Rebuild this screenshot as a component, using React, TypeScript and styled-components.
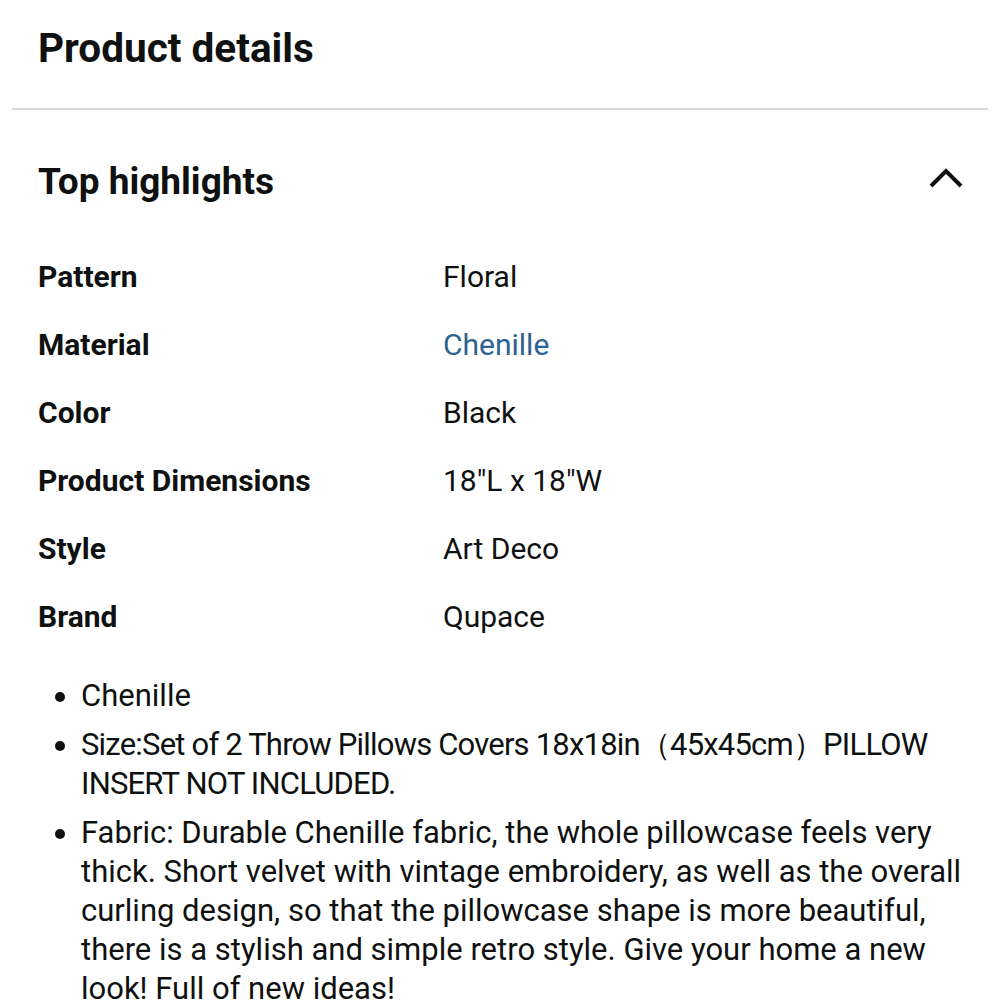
import React from "react";
import styled, { createGlobalStyle } from "styled-components";

const Global = createGlobalStyle`
  html, body {
    margin: 0;
    padding: 0;
    background: #ffffff;
  }
  body {
    font-family: Roboto, "Noto Sans", "Liberation Sans", sans-serif;
    color: #0f1111;
  }
`;

const Page = styled.div`
  width: 1000px;
  padding: 0 12px;
  box-sizing: border-box;
`;

const Header = styled.div`
  height: 108px;
  display: flex;
  align-items: center;
  padding: 0 26px;
  border-bottom: 2px solid #d5d9d9;
`;

const Title = styled.h1`
  margin: 0;
  font-size: 40.5px;
  font-weight: 700;
  padding-bottom: 12px;
`;

const Section = styled.section`
  padding: 0 26px;
`;

const SectionHead = styled.div`
  height: 142px;
  display: flex;
  align-items: center;
  justify-content: space-between;
  padding-bottom: 2px;
`;

const SectionTitle = styled.h2`
  margin: 0;
  font-size: 37px;
  font-weight: 700;
`;

const Chevron = styled.svg`
  width: 36px;
  height: 24px;
  margin: 0 -2px 8px 0;
`;

const Table = styled.div`
  display: grid;
  grid-template-columns: 405px 1fr;
  grid-auto-rows: 68px;
  align-items: center;
  margin-top: -12px;
`;

const Label = styled.div`
  font-size: 30px;
  font-weight: 700;
`;

const Value = styled.div<{ link?: boolean }>`
  font-size: 30px;
  color: ${(p) => (p.link ? "#2d6390" : "#0f1111")};
`;

const Bullets = styled.ul`
  margin: 26px 0 0;
  padding: 0 0 0 43px;
  font-size: 31px;
  line-height: 39px;
`;

const Bullet = styled.li<{ tight?: boolean }>`
  margin-bottom: 10px;
  letter-spacing: ${(p) => (p.tight ? "-0.8px" : "normal")};
`;

const rows: { label: string; value: string; link?: boolean }[] = [
  { label: "Pattern", value: "Floral" },
  { label: "Material", value: "Chenille", link: true },
  { label: "Color", value: "Black" },
  { label: "Product Dimensions", value: "18\"L x 18\"W" },
  { label: "Style", value: "Art Deco" },
  { label: "Brand", value: "Qupace" },
];

const bullets: { text: string; tight?: boolean }[] = [
  { text: "Chenille" },
  {
    text: "Size:Set of 2 Throw Pillows Covers 18x18in（45x45cm）PILLOW INSERT NOT INCLUDED.",
    tight: true,
  },
  {
    text: "Fabric: Durable Chenille fabric, the whole pillowcase feels very thick. Short velvet with vintage embroidery, as well as the overall curling design, so that the pillowcase shape is more beautiful, there is a stylish and simple retro style. Give your home a new look! Full of new ideas!",
  },
];

export default function App() {
  return (
    <Page>
      <Global />
      <Header>
        <Title>Product details</Title>
      </Header>
      <Section>
        <SectionHead>
          <SectionTitle>Top highlights</SectionTitle>
          <Chevron viewBox="0 0 36 24" fill="none">
            <path d="M3 21 L18 6 L33 21" stroke="#0f1111" strokeWidth="4" />
          </Chevron>
        </SectionHead>
        <Table>
          {rows.map((r) => (
            <React.Fragment key={r.label}>
              <Label>{r.label}</Label>
              <Value link={r.link}>{r.value}</Value>
            </React.Fragment>
          ))}
        </Table>
        <Bullets>
          {bullets.map((b) => (
            <Bullet key={b.text} tight={b.tight}>
              {b.text}
            </Bullet>
          ))}
        </Bullets>
      </Section>
    </Page>
  );
}
